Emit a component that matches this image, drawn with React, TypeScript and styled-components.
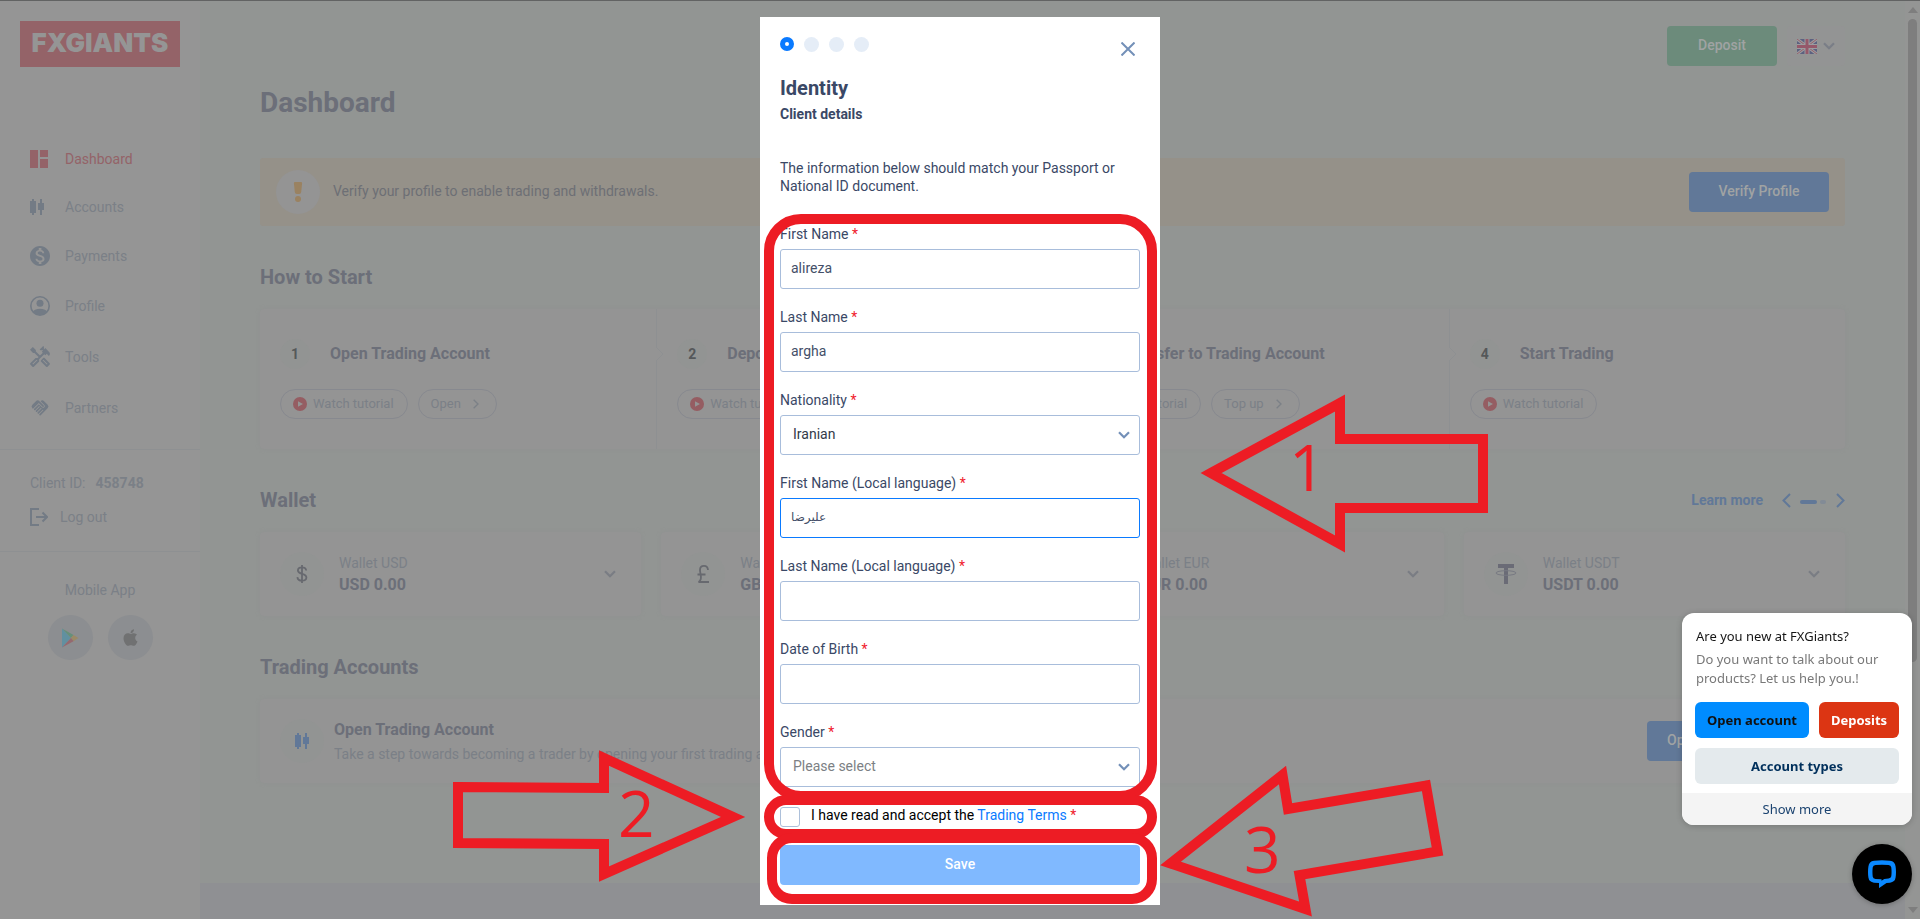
import React from "react";
import styled, { createGlobalStyle } from "styled-components";
import { MdHandshake, MdMonetizationOn, MdOutlineHandyman } from "react-icons/md";
import { FaApple } from "react-icons/fa";

const color = {
  page: "#929593",
  panel: "#959595",
  card: "#949494",
  cardEdge: "#8f9191",
  line: "#8e9092",
  heading: "#6c6f79",
  muted: "#7b8087",
  icon: "#737b85",
  red: "#946368",
  blue: "#617898",
  green: "#6c8b7b",
  mark: "#ed1c24",
  ink: "#3a4866",
  field: "#a8bddb",
  accent: "#0a7aff",
};

const GlobalStyle = createGlobalStyle`
  *, *::before, *::after { box-sizing: border-box; }
  body {
    margin: 0;
    background: ${color.page};
    font-family: Roboto, "DejaVu Sans", sans-serif;
    font-size: 14px;
    line-height: 18px;
    color: ${color.muted};
  }
  button, input, select { font: inherit; color: inherit; }
  button { cursor: pointer; padding: 0; border: 0; background: none; }
  a { color: inherit; text-decoration: none; }
  h1, h2, h3, p, ul, ol { margin: 0; padding: 0; }
  ul, ol { list-style: none; }
  svg { display: block; flex: none; }
`;

/* ---------- page shell ---------- */

const Shell = styled.div`
  display: flex;
  min-height: 100vh;
  padding-right: 15px;
  border-top: 1px solid #626363;
`;

const Sidebar = styled.aside`
  flex: none;
  width: 200px;
  background: ${color.panel};
`;

const Logo = styled.a`
  display: flex;
  align-items: center;
  justify-content: center;
  height: 46px;
  margin: 20px 20px 68px;
  padding-bottom: 2px;
  background: ${color.red};
  color: ${color.panel};
  font: 900 26px/30px Inter, sans-serif;
`;

const Nav = styled.nav`
  padding-bottom: 16px;
`;

const NavLink = styled.a<{ $active?: boolean }>`
  display: flex;
  align-items: center;
  gap: 15px;
  padding: 15px 0 15px 30px;
  color: ${(p) => (p.$active ? color.red : color.muted)};
`;

const NavIcon = styled.span<{ $centred?: boolean; $active?: boolean }>`
  display: flex;
  justify-content: ${(p) => (p.$centred ? "center" : "flex-start")};
  width: 20px;
  color: ${(p) => (p.$active ? color.red : color.icon)};
`;

const SidebarBlock = styled.div`
  border-top: 1px solid ${color.line};
  padding: 24px 30px;
  height: 102px;
`;

const ClientLine = styled.p`
  display: flex;
  gap: 10px;
  margin-bottom: 16px;

  strong { font-weight: 700; }
`;

const LogoutButton = styled.button`
  display: flex;
  align-items: center;
  gap: 12px;
`;

const MobileApps = styled.div`
  display: flex;
  flex-direction: column;
  align-items: center;
  gap: 16px;
  padding-top: 29px;
  border-top: 1px solid ${color.line};
`;

const StoreRow = styled.div`
  display: flex;
  gap: 15px;
`;

const StoreLink = styled.a`
  display: grid;
  place-items: center;
  width: 45px;
  height: 45px;
  border-radius: 50%;
  background: #8c8e91;
  color: #707172;
`;

const Main = styled.main`
  flex: 1;
  min-width: 0;
  display: flex;
  flex-direction: column;
`;

const Content = styled.div`
  padding: 25px 60px 100px;
`;

const Footer = styled.footer`
  flex: 1;
  min-height: 35px;
  background: #8f9093;
`;

const TopBar = styled.header`
  display: flex;
  justify-content: flex-end;
  gap: 10px;
`;

const Button = styled.button<{ $tone?: "green" | "blue"; $width?: number }>`
  height: 40px;
  width: ${(p) => (p.$width ? `${p.$width}px` : "auto")};
  padding: 0 20px 2px;
  border-radius: 4px;
  background: ${(p) => (p.$tone === "green" ? color.green : color.blue)};
  color: #a0a3a3;
  font-weight: 500;
  white-space: nowrap;
`;

const LanguageButton = styled.button`
  display: flex;
  align-items: center;
  justify-content: center;
  gap: 6px;
  width: 58px;
  height: 40px;
  border-radius: 4px;
  background: #939494;
  color: #7a7e87;
`;

const PageTitle = styled.h1`
  margin: 20px 0 38px;
  font-size: 28px;
  line-height: 34px;
  font-weight: 700;
  color: ${color.heading};
`;

const Notice = styled.div`
  display: flex;
  align-items: center;
  gap: 13px;
  padding: 12px 16px;
  border-radius: 3px;
  background: #959189;
  color: #6d6f75;

  p { flex: 1; padding-bottom: 2px; }
`;

const Round = styled.span<{ $size: number; $plain?: boolean }>`
  flex: none;
  display: grid;
  place-items: center;
  width: ${(p) => p.$size}px;
  height: ${(p) => p.$size}px;
  border-radius: 50%;
  background: ${(p) => (p.$plain ? color.card : "#929493")};
  color: #66686f;
`;

const SectionHead = styled.div`
  display: flex;
  align-items: center;
  justify-content: space-between;
  margin: 39px 0 20px;
`;

const SectionTitle = styled.h2`
  font-size: 20px;
  line-height: 24px;
  font-weight: 700;
  color: ${color.heading};
`;

const Pager = styled.div`
  display: flex;
  align-items: center;
  color: ${color.blue};

  a { margin-right: 19px; font-weight: 700; }
`;

const PagerDots = styled.span`
  display: flex;
  gap: 3px;
  margin: 3px 10px 0 9px;
`;

const PagerDot = styled.i<{ $on?: boolean }>`
  width: ${(p) => (p.$on ? 17 : 6)}px;
  height: 4px;
  border-radius: 2px;
  background: ${(p) => (p.$on ? color.blue : "#828b96")};
`;

const Card = styled.div`
  display: flex;
  align-items: center;
  gap: 15px;
  height: 84px;
  padding: 0 20px;
  border-radius: 4px;
  background: ${color.card};
  box-shadow: 0 0 4px ${color.cardEdge};
`;

const Steps = styled.ol`
  display: grid;
  grid-template-columns: repeat(4, 1fr);
  border-radius: 4px;
  background: ${color.card};
  box-shadow: 0 0 4px ${color.cardEdge};
`;

const Step = styled.li`
  position: relative;
  padding: 30px 20px;

  & + & { border-left: 1px solid ${color.line}; }
`;

const StepNotch = styled.svg`
  position: absolute;
  left: -1px;
  top: 37px;
`;

const StepHead = styled.div`
  display: flex;
  align-items: center;
  gap: 20px;
  margin-bottom: 20px;

  h3 {
    font-size: 16px;
    line-height: 20px;
    font-weight: 700;
    color: ${color.heading};
  }
`;

const StepNumber = styled(Round)`
  font-weight: 700;
  color: #55585a;
`;

const PillRow = styled.div`
  display: flex;
  gap: 10px;
`;

const Pill = styled.button`
  display: flex;
  align-items: center;
  gap: 6px;
  height: 30px;
  padding: 0 13px 0 12px;
  border: 1px solid #87898f;
  border-radius: 15px;
  font-size: 13px;
  white-space: nowrap;
`;

const PillArrow = styled.span`
  padding: 0 4px 0 6px;
`;

const Wallets = styled.div`
  display: grid;
  grid-template-columns: repeat(4, 1fr);
  gap: 20px;
`;

const WalletText = styled.div`
  flex: 1;

  p { margin-bottom: 3px; }
  strong {
    display: block;
    font-size: 16px;
    line-height: 20px;
    font-weight: 700;
    color: ${color.heading};
  }
`;

const WalletToggle = styled.button`
  padding: 5px;
  color: #7a7d84;
`;

const AccountText = styled.div`
  flex: 1;
  margin-left: -5px;

  h3 {
    margin-bottom: 5px;
    font-size: 16px;
    line-height: 20px;
    font-weight: 700;
    color: ${color.heading};
  }
`;

/* ---------- scroll rail ---------- */

const Rail = styled.div`
  position: fixed;
  top: 1px;
  right: 0;
  bottom: 0;
  display: flex;
  flex-direction: column;
  align-items: center;
  justify-content: space-between;
  width: 15px;
  padding: 6px 0;
  background: #949594;
`;

const RailThumb = styled.span`
  width: 9px;
  height: 71%;
  margin: 6px 0 auto;
  border-radius: 5px;
  background: #7e7e7e;
`;

/* ---------- dialog ---------- */

const Overlay = styled.div`
  position: fixed;
  inset: 0;
  display: flex;
  justify-content: center;
  align-items: flex-start;
  padding-top: 17px;
`;

const Dialog = styled.form`
  position: relative;
  width: 400px;
  padding: 20px;
  background: #fff;
  color: ${color.ink};
`;

const DialogHead = styled.div`
  display: flex;
  justify-content: space-between;
  height: 39px;
`;

const Dots = styled.ol`
  display: flex;
  gap: 10px;
`;

const Dot = styled.li<{ $on?: boolean }>`
  width: ${(p) => (p.$on ? 14 : 15)}px;
  height: ${(p) => (p.$on ? 14 : 15)}px;
  border-radius: 50%;
  border: ${(p) => (p.$on ? `5px solid ${color.accent}` : "0")};
  background: ${(p) => (p.$on ? "#fff" : "#e5edf7")};
`;

const CloseButton = styled.button`
  align-self: flex-start;
  margin: 3px 3px 0 0;
  padding: 2px;
  color: #7390b8;
`;

const DialogTitle = styled.h2`
  margin-bottom: 5px;
  font-size: 20px;
  line-height: 24px;
  font-weight: 700;
`;

const DialogSub = styled.h3`
  margin-bottom: 36px;
  font-size: 14px;
  line-height: 18px;
  font-weight: 700;
`;

const Intro = styled.p`
  margin-bottom: 30px;
`;

const Fields = styled.div`
  display: grid;
  gap: 19px;
`;

const Field = styled.div`
  display: grid;
  gap: 6px;
`;

const Star = styled.span`
  color: #f0202c;
`;

const Control = styled.div`
  position: relative;

  svg {
    position: absolute;
    right: 10px;
    top: 16px;
    color: #7390b8;
    pointer-events: none;
  }
`;

const TextInput = styled.input<{ $active?: boolean }>`
  display: block;
  width: 100%;
  height: 40px;
  padding: 0 10px 2px;
  border: 1px solid ${(p) => (p.$active ? color.accent : color.field)};
  border-radius: 3px;
  outline: 0;
  background: #fff;
  color: #444f68;

  &:lang(fa) { font-size: 12px; }
`;

const SelectInput = styled.select<{ $empty?: boolean }>`
  display: block;
  width: 100%;
  height: 40px;
  padding: 0 30px 2px 12px;
  border: 1px solid ${color.field};
  border-radius: 3px;
  appearance: none;
  outline: 0;
  background: #fff;
  color: ${(p) => (p.$empty ? "#7c7f84" : "#333a48")};
`;

const Terms = styled.div`
  display: flex;
  gap: 11px;
  height: 20px;
  margin: 20px 0 18px;
  color: #000;

  label { line-height: 16px; }
  a { color: ${color.accent}; }
`;

const Tick = styled.input`
  flex: none;
  width: 20px;
  height: 20px;
  margin: 0;
  border: 1px solid #adc0da;
  border-radius: 3px;
  appearance: none;
  background: #fff;
`;

const SaveButton = styled.button`
  display: block;
  width: 100%;
  height: 40px;
  padding-bottom: 2px;
  border-radius: 4px;
  background: #80b9ff;
  color: #fff;
  font-weight: 500;
`;

const Marks = styled.svg`
  position: absolute;
  left: 0;
  top: 0;
  width: 100%;
  height: 100%;
  overflow: visible;
  pointer-events: none;

  text {
    fill: ${color.mark};
    font: 400 64px "Open Sans", sans-serif;
  }
`;

/* ---------- chat ---------- */

const ChatStack = styled.div`
  position: fixed;
  right: 8px;
  bottom: 15px;
  display: flex;
  flex-direction: column;
  align-items: flex-end;
  gap: 19px;
  font-family: "Noto Sans", sans-serif;
`;

const ChatCard = styled.section`
  width: 230px;
  border-radius: 12px;
  overflow: hidden;
  background: #fff;
  box-shadow: 0 1px 6px rgba(0, 0, 0, 0.2);
`;

const ChatBody = styled.div`
  padding: 13px 13px 9px;

  h2 {
    padding-left: 1px;
    font-size: 13px;
    line-height: 20px;
    font-weight: 400;
    color: #151515;
  }
  p {
    margin: 4px 0 14px;
    padding-left: 1px;
    font-size: 13px;
    line-height: 19px;
    color: #787878;
  }
`;

const ChatActions = styled.div`
  display: grid;
  grid-template-columns: 114px 1fr;
  gap: 10px;
`;

const ChatButton = styled.button<{ $tone: "blue" | "red" | "grey" }>`
  height: 36px;
  border-radius: 6px;
  grid-column: ${(p) => (p.$tone === "grey" ? "1 / -1" : "auto")};
  background: ${(p) => ({ blue: "#008cff", red: "#dc3513", grey: "#e4eaed" })[p.$tone]};
  color: ${(p) => ({ blue: "#111", red: "#fff", grey: "#00305c" })[p.$tone]};
  font-size: 13px;
  font-weight: 700;
`;

const ChatMore = styled.button`
  width: 100%;
  height: 32px;
  background: #f4f4f4;
  color: #1b4370;
  font-size: 13px;
`;

const ChatBubble = styled.button`
  display: grid;
  place-items: center;
  width: 60px;
  height: 60px;
  border-radius: 50%;
  background: #000;
  box-shadow: 0 1px 5px rgba(0, 0, 0, 0.25);
`;

/* ---------- drawings ---------- */

const Chevron = () => (
  <svg width="12" height="8" viewBox="0 0 12 8" fill="none" stroke="currentColor" strokeWidth="2.200">
    <path d="M1 1.2 6 6.2 11 1.2" />
  </svg>
);

const SideChevron = ({ left, size }: { left?: boolean; size: number }) => (
  <svg width={(size * 9) / 15} height={size} viewBox="0 0 9 15" fill="none" stroke="currentColor" strokeWidth="2">
    <path d={left ? "M8 1 1.5 7.5 8 14" : "M1 1l6.500 6.500L1 14"} />
  </svg>
);

const DashboardIcon = () => (
  <svg width="18" height="18" fill="currentColor">
    <path d="M0 0h8v18H0zM10 0h8v7h-8zM10 9h8v9h-8z" />
  </svg>
);

const CandlesIcon = ({ fill = "currentColor" }: { fill?: string }) => (
  <svg width="14" height="16" fill={fill}>
    <path d="M2 0h2v2h2v12H4v2H2v-2H0V2h2zM10 0h2v4h2v7h-2v5h-2v-5H8V4h2z" />
  </svg>
);

const ProfileIcon = () => (
  <svg width="20" height="20" viewBox="0 0 20 20">
    <circle cx="10" cy="10" r="9.200" fill="none" stroke="currentColor" strokeWidth="1.600" />
    <circle cx="10" cy="7.300" r="3.500" fill="currentColor" />
    <path d="M3 15.500Q5 12.800 10 12.800t7 2.700Q14.500 19 10 19t-7-3.500z" fill="currentColor" />
  </svg>
);

const LogoutIcon = () => (
  <svg width="18" height="18" fill="none" stroke={color.icon} strokeWidth="2">
    <path d="M9 1H1v16h8M6 9h11M12.500 4.500 17 9l-4.500 4.500" />
  </svg>
);

const PlayStoreIcon = () => (
  <svg width="18" height="20" viewBox="0 0 18 20">
    <path d="M1 .5v19l9-9.500z" fill="#6190a0" />
    <path d="M1 .5 12.500 7 10 10z" fill="#66907a" />
    <path d="M12.500 7 17.500 10l-5 3.200L9.800 10z" fill="#9b8a67" />
    <path d="M1 19.500 12.500 13.200 10 10z" fill="#95696f" />
  </svg>
);

const Flag = () => (
  <svg width="20" height="15" viewBox="0 0 20 15">
    <path d="M0 0h20v15H0z" fill="#5c6180" />
    <path d="M0 0l20 15M20 0 0 15" stroke="#9c9c9f" strokeWidth="3" />
    <path d="M0 0l20 15M20 0 0 15" stroke="#95606c" strokeWidth="1" />
    <path d="M10 0v15M0 7.500h20" stroke="#9c9c9f" strokeWidth="5" />
    <path d="M10 0v15M0 7.500h20" stroke="#95586a" strokeWidth="3" />
  </svg>
);

const AlertIcon = () => (
  <svg width="10" height="20" viewBox="0 0 10 20" fill="#9a8261">
    <path d="M2 0h6q1.200 0 1.100 1.200L8.200 10q-.2 2-2 2H3.800q-1.800 0-2-2L.9 1.200Q.8 0 2 0z" />
    <circle cx="5" cy="17" r="3" />
  </svg>
);

const PlayBadge = () => (
  <svg width="14" height="14">
    <circle cx="7" cy="7" r="7" fill="#955d62" />
    <path d="M5 4.200v5.600L10 7z" fill={color.card} />
  </svg>
);

const signPaths: Record<string, string> = {
  USD: "M10 1v18M14.200 6.500C14 4.500 12.500 3.300 10 3.300S5.900 4.500 5.900 6.500c0 4.300 8.500 2.500 8.500 7 0 2-1.800 3.200-4.400 3.200s-4.400-1.300-4.600-3.600",
  GBP: "M15 6C14.800 3.300 13.200 1.800 11 1.800 8.300 1.800 7 3.500 7 6c0 3 1.500 6 .8 9-.3 1.300-1.200 2.500-2.300 3H16M4.500 10.500h8",
  EUR: "M15 4.500a6.500 6.500 0 1 0 0 11M3 8.500h9M3 11.500h8",
};

const CurrencySign = ({ code }: { code: string }) =>
  code === "USDT" ? (
    <svg width="22" height="20" viewBox="0 0 22 20">
      <path d="M3 0h16v4h-6v16H9V4H3z" fill="#6a6b76" />
      <ellipse cx="11" cy="9" rx="10" ry="2.300" fill="none" stroke="#777982" />
    </svg>
  ) : (
    <svg width="20" height="20" fill="none" stroke="#67696f" strokeWidth="1.800">
      <path d={signPaths[code]} />
    </svg>
  );

/* ---------- data ---------- */

const nav = [
  { label: "Dashboard", icon: <DashboardIcon />, active: true },
  { label: "Accounts", icon: <CandlesIcon /> },
  { label: "Payments", icon: <MdMonetizationOn size={20} viewBox="2 2 20 20" /> },
  { label: "Profile", icon: <ProfileIcon /> },
  { label: "Tools", icon: <MdOutlineHandyman size={22} viewBox="1 1 22 22" />, centred: true },
  { label: "Partners", icon: <MdHandshake size={20} />, centred: true },
];

const steps = [
  { title: "Open Trading Account", action: "Open" },
  { title: "Deposit Funds", action: "Deposit" },
  { title: "Transfer to Trading Account", action: "Top up" },
  { title: "Start Trading" },
];

const wallets = ["USD", "GBP", "EUR", "USDT"];

type FieldSpec = {
  id: string;
  label: string;
  value?: string;
  select?: string;
  lang?: string;
  active?: boolean;
};

const fields: FieldSpec[] = [
  { id: "first", label: "First Name", value: "alireza" },
  { id: "last", label: "Last Name", value: "argha" },
  { id: "nationality", label: "Nationality", select: "Iranian" },
  { id: "first-local", label: "First Name (Local language)", value: "علیرضا", lang: "fa", active: true },
  { id: "last-local", label: "Last Name (Local language)", value: "", lang: "fa" },
  { id: "birth", label: "Date of Birth", value: "" },
  { id: "gender", label: "Gender", select: "Please select" },
];

/* ---------- parts ---------- */

const FormField = ({ id, label, value, select, lang, active }: FieldSpec) => (
  <Field>
    <label htmlFor={id}>
      {label} <Star>*</Star>
    </label>
    <Control>
      {select ? (
        <>
          <SelectInput id={id} $empty={select === "Please select"}>
            <option>{select}</option>
          </SelectInput>
          <Chevron />
        </>
      ) : (
        <TextInput id={id} type="text" lang={lang} defaultValue={value} $active={active} />
      )}
    </Control>
  </Field>
);

const IdentityDialog = () => (
  <Overlay>
    <Dialog role="dialog" aria-labelledby="dialog-title" onSubmit={(e) => e.preventDefault()}>
      <DialogHead>
        <Dots>
          <Dot $on />
          <Dot />
          <Dot />
          <Dot />
        </Dots>
        <CloseButton type="button" aria-label="Close">
          <svg width="14" height="14" fill="none" stroke="currentColor" strokeWidth="2">
            <path d="M.5.5l13 13M13.500.5l-13 13" />
          </svg>
        </CloseButton>
      </DialogHead>
      <DialogTitle id="dialog-title">Identity</DialogTitle>
      <DialogSub>Client details</DialogSub>
      <Intro>The information below should match your Passport or National ID document.</Intro>
      <Fields>
        {fields.map((f) => (
          <FormField key={f.id} {...f} />
        ))}
      </Fields>
      <Terms>
        <Tick type="checkbox" id="terms" />
        <label htmlFor="terms">
          I have read and accept the <a href="#terms">Trading Terms</a> <Star>*</Star>
        </label>
      </Terms>
      <SaveButton type="submit">Save</SaveButton>
      <Marks viewBox="0 0 400 888">
        <g fill="none" stroke={color.mark} strokeWidth="10" strokeMiterlimit="10">
          <rect x="9" y="202" width="383" height="577" rx="32" />
          <rect x="9" y="783" width="383" height="34" rx="17" />
          <rect x="12" y="821" width="380" height="61" rx="20" />
          <path d="M451 456 580 386v36h143v69H580v36z" />
          <path d="M-302 770-156 771v-30l129 59-129 57v-30l-146-1z" />
          <path d="M410.500 846.500 522.500 758l5.500 34 138-23.500 11.500 66-138 23.500 6 34z" />
        </g>
        <text x="529" y="474">1</text>
        <text x="-142" y="820">2</text>
        <text x="484" y="856">3</text>
      </Marks>
    </Dialog>
  </Overlay>
);

const ChatWidget = () => (
  <ChatStack>
    <ChatCard>
      <ChatBody>
        <h2>Are you new at FXGiants?</h2>
        <p>Do you want to talk about our products? Let us help you.!</p>
        <ChatActions>
          <ChatButton $tone="blue">Open account</ChatButton>
          <ChatButton $tone="red">Deposits</ChatButton>
          <ChatButton $tone="grey">Account types</ChatButton>
        </ChatActions>
      </ChatBody>
      <ChatMore>Show more</ChatMore>
    </ChatCard>
    <ChatBubble aria-label="Open chat">
      <svg width="28" height="28" viewBox="0 0 28 28">
        <path
          fill="#0a88ff"
          fillRule="evenodd"
          d="M6 .8Q14-.4 22 .8q5 .7 5.600 5.700.8 5.500 0 11-.6 4.500-5.600 5.200l-3.500.4-7.500 5V23l-5-.3Q1 22 .4 17.500q-.8-5.500 0-11Q1 1.500 6 .8zM7.500 5Q5 5.300 4.700 7.500q-.5 4.500 0 9Q5 18.700 7.500 18.900l6 .3v1.600l2.800-1.900 4.200-.3q2.500-.3 2.800-2.300.5-4.400 0-8.800-.3-2.200-2.800-2.500-6.500-.7-13 0z"
        />
      </svg>
    </ChatBubble>
  </ChatStack>
);

export default function App() {
  return (
    <>
      <GlobalStyle />
      <Shell>
        <Sidebar>
          <Logo href="#home">FXGIANTS</Logo>
          <Nav>
            {nav.map((item) => (
              <NavLink key={item.label} href={`#${item.label.toLowerCase()}`} $active={item.active}>
                <NavIcon $active={item.active} $centred={item.centred}>
                  {item.icon}
                </NavIcon>
                {item.label}
              </NavLink>
            ))}
          </Nav>
          <SidebarBlock>
            <ClientLine>
              Client ID: <strong>458748</strong>
            </ClientLine>
            <LogoutButton>
              <LogoutIcon />
              Log out
            </LogoutButton>
          </SidebarBlock>
          <MobileApps>
            <p>Mobile App</p>
            <StoreRow>
              <StoreLink href="#google-play" aria-label="Google Play">
                <PlayStoreIcon />
              </StoreLink>
              <StoreLink href="#app-store" aria-label="App Store">
                <FaApple size={19} />
              </StoreLink>
            </StoreRow>
          </MobileApps>
        </Sidebar>

        <Main>
          <Content>
            <TopBar>
              <Button $tone="green" $width={110}>Deposit</Button>
              <LanguageButton aria-label="Language">
                <Flag />
                <Chevron />
              </LanguageButton>
            </TopBar>
            <PageTitle>Dashboard</PageTitle>
            <Notice>
              <Round $size={44} $plain>
                <AlertIcon />
              </Round>
              <p>Verify your profile to enable trading and withdrawals.</p>
              <Button $width={140}>Verify Profile</Button>
            </Notice>

            <SectionHead>
              <SectionTitle>How to Start</SectionTitle>
            </SectionHead>
            <Steps>
              {steps.map((step, i) => (
                <Step key={step.title}>
                  {i > 0 && (
                    <StepNotch width="8" height="16" fill={color.card} stroke={color.line}>
                      <path d="M0 1 7 8 0 15" />
                    </StepNotch>
                  )}
                  <StepHead>
                    <StepNumber $size={30}>{i + 1}</StepNumber>
                    <h3>{step.title}</h3>
                  </StepHead>
                  <PillRow>
                    <Pill>
                      <PlayBadge />
                      Watch tutorial
                    </Pill>
                    {step.action && (
                      <Pill>
                        {step.action}
                        <PillArrow>
                          <SideChevron size={10} />
                        </PillArrow>
                      </Pill>
                    )}
                  </PillRow>
                </Step>
              ))}
            </Steps>

            <SectionHead>
              <SectionTitle>Wallet</SectionTitle>
              <Pager>
                <a href="#wallets">Learn more</a>
                <button aria-label="Previous">
                  <SideChevron left size={15} />
                </button>
                <PagerDots>
                  <PagerDot $on />
                  <PagerDot />
                </PagerDots>
                <button aria-label="Next">
                  <SideChevron size={15} />
                </button>
              </Pager>
            </SectionHead>
            <Wallets>
              {wallets.map((code) => (
                <Card key={code}>
                  <Round $size={44}>
                    <CurrencySign code={code} />
                  </Round>
                  <WalletText>
                    <p>Wallet {code}</p>
                    <strong>{code} 0.00</strong>
                  </WalletText>
                  <WalletToggle aria-label={`Wallet ${code} details`}>
                    <Chevron />
                  </WalletToggle>
                </Card>
              ))}
            </Wallets>

            <SectionHead>
              <SectionTitle>Trading Accounts</SectionTitle>
            </SectionHead>
            <Card>
              <Round $size={44}>
                <CandlesIcon fill={color.blue} />
              </Round>
              <AccountText>
                <h3>Open Trading Account</h3>
                <p>Take a step towards becoming a trader by opening your first trading account.</p>
              </AccountText>
              <Button $width={178}>Open Trading Account</Button>
            </Card>
          </Content>
          <Footer />
        </Main>
      </Shell>

      <Rail aria-hidden="true">
        <svg width="10" height="6" fill="#7e7e7e">
          <path d="M0 6 5 0l5 6z" />
        </svg>
        <RailThumb />
        <svg width="10" height="6" fill="#7e7e7e">
          <path d="M0 0h10L5 6z" />
        </svg>
      </Rail>

      <IdentityDialog />
      <ChatWidget />
    </>
  );
}
